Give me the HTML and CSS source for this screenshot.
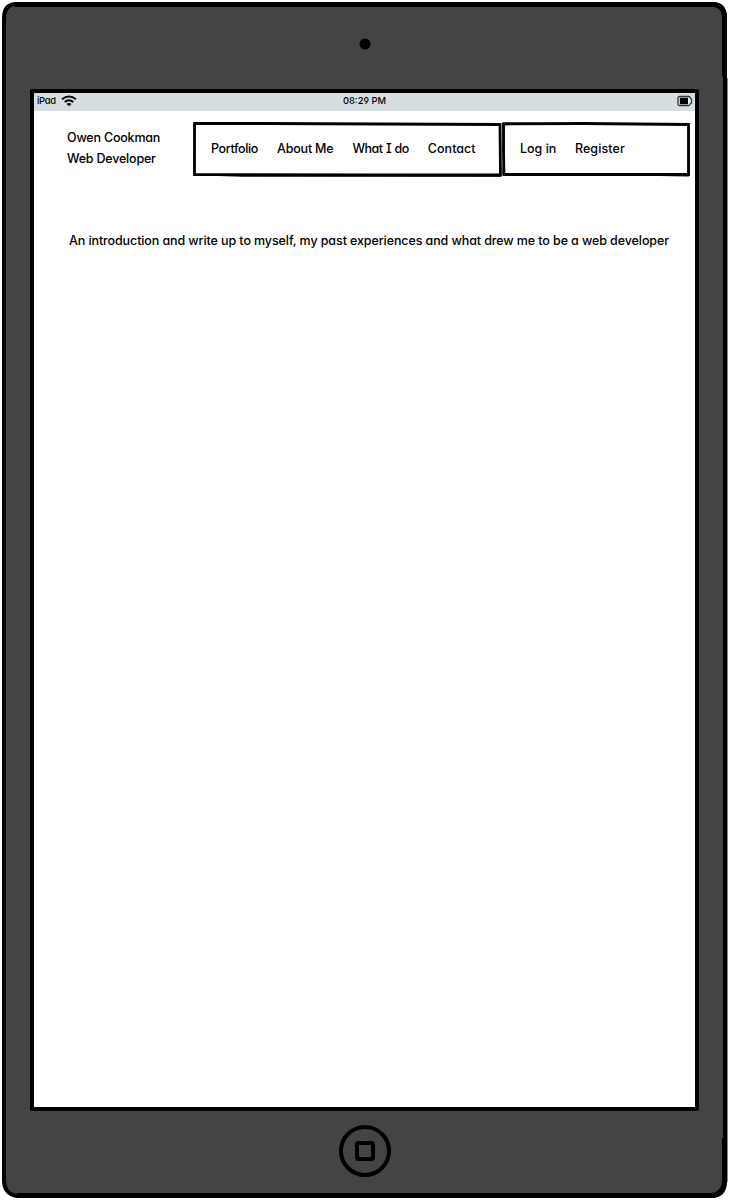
FILE: index.html
```html
<!DOCTYPE html>
<html lang="en">
<head>
<meta charset="utf-8">
<title>Owen Cookman - Web Developer</title>
<link rel="stylesheet" href="styles.css">
</head>
<body>
<div class="device">
  <svg class="shell" viewBox="0 0 729 1200" aria-hidden="true">
    <path d="M15 4H712Q725 4 725 18V1181Q725 1196 711 1196H17Q4 1194 4 1180V18Q4 5 15 4Z" fill="#444" stroke="#000" stroke-width="4"/>
    <path d="M15 4.500H712Q724.500 4.500 724.500 18V77M724.500 1138V1181Q723.500 1195 711 1195.500H17" fill="none" stroke="#000" stroke-width="5"/>
    <path d="M727.500 78V1182" stroke="#888" stroke-width="1"/>
  </svg>
  <div class="top-bezel"><svg class="camera" viewBox="0 0 12 12"><circle cx="6" cy="6" r="5.500"/></svg></div>
  <main class="screen">
    <div class="status">
      <div class="carrier"><span class="ipad">iPad</span>
        <svg class="wifi" viewBox="0 0 16 12"><g fill="none" stroke="#000" stroke-width="2"><path d="M1 4.200Q8-1 15 4.200"/><path d="M3.700 7Q8 3.400 12.300 7"/></g><path d="M5.500 9Q8 7.200 10.500 9L8 11.300Z"/></svg>
      </div>
      <span class="time">08:29 PM</span>
      <svg class="battery" viewBox="0 0 16 12"><path d="M2.500 1.500H11.500Q13 1.500 13 3L14.500 4V8L13 9Q13 10.500 11.500 10.500H2.500Q1 10.500 1 9V3Q1 1.500 2.500 1.500Z" fill="#eef2f3" stroke="#333" stroke-width="1.300"/><path d="M2.800 2.800H11V9.200H2.800Z"/></svg>
    </div>
    <header class="header">
      <div class="brand"><span class="owner">Owen Cookman</span><span class="role">Web Developer</span></div>
      <nav class="box nav">
        <svg class="outline" viewBox="0 0 309 56"><path d="M1.500 1.500L70 1.500L307 2.500L307.500 53L180 52.800L1.500 52.500L1.500 30Z" fill="none" stroke="#000" stroke-width="2.800"/><path d="M1 52.500L50 54H308M307 2L307 30L307 54M2 2L1 52" fill="none" stroke="#000" stroke-width="1.300"/></svg>
        <span class="portfolio">Portfolio</span><span class="about">About Me</span><span class="what">What I do</span><span class="contact">Contact</span>
      </nav>
      <div class="box account">
        <svg class="outline" viewBox="0 0 188 56"><path d="M1.500 2L80 1.500L186.500 2.500L186.500 25L186.500 52.500L80 52.500L2 52.500L1.500 30Z" fill="none" stroke="#000" stroke-width="2.800"/><path d="M1 1L100 2H187M2 3L2 30L1 53M70 52L187 54" fill="none" stroke="#000" stroke-width="1.200"/></svg>
        <span class="login">Log in</span><span class="register">Register</span>
      </div>
    </header>
    <p class="intro">An introduction and write up to myself, my past experiences and what drew me to be a web developer</p>
  </main>
  <div class="bottom-bezel"><svg class="home" viewBox="0 0 52 52"><circle cx="26" cy="26" r="24" fill="none" stroke="#000" stroke-width="4"/><rect x="18" y="18" width="16" height="16" rx="1.500" fill="none" stroke="#000" stroke-width="4"/></svg></div>
</div>
</body>
</html>
```
FILE: styles.css
```css
* { box-sizing: border-box; }
body { margin: 0; background: #fff; color: #000; font: 450 12.5px/21px Inter, "Open Sans", sans-serif; font-feature-settings: "cv11", "cv08", "cv04"; }
.device { position: relative; width: 729px; height: 1200px; display: flex; flex-direction: column; align-items: center; }
.shell { position: absolute; left: 0; top: 0; width: 729px; height: 1200px; z-index: -1; }
.top-bezel { width: 100%; height: 89px; display: flex; justify-content: center; padding: 38px 0 0 1px; }
.camera { width: 12px; height: 12px; }
.screen { width: 669px; height: 1022px; border: 4px solid #000; border-radius: 2px; background: #fff; }
.status { height: 18px; background: #d7dee1; display: grid; grid-template-columns: 1fr auto 1fr; padding: 0 3px; font-size: 9.4px; line-height: 16px; }
.carrier { display: flex; gap: 5px; }
.ipad { letter-spacing: -0.3px; }
.wifi { width: 16px; height: 12px; margin-top: 2px; }
.battery { width: 16px; height: 12px; margin: 2px -1px 0 0; justify-self: end; }
.header { display: flex; padding: 11px 0 0 33px; }
.brand { width: 126px; padding-top: 5px; display: flex; flex-direction: column; align-items: flex-start; letter-spacing: -0.2px; }
.box { position: relative; height: 56px; display: flex; padding: 16px 0 0 18px; white-space: nowrap; }
.outline { position: absolute; left: 0; top: 0; width: 100%; height: 100%; overflow: visible; }
.nav { width: 309px; gap: 19px; }
.account { width: 188px; gap: 18.5px; }
.portfolio { letter-spacing: -0.36px; }
.about { letter-spacing: -0.2px; }
.what { letter-spacing: -0.5px; word-spacing: 0.6px; }
.contact { letter-spacing: 0.04px; }
.register { letter-spacing: 0.1px; }
.intro { margin: 52px 0 0 35px; white-space: nowrap; letter-spacing: -0.1px; }
.bottom-bezel { padding: 14px 0 0 1px; }
.home { display: block; width: 52px; height: 52px; }
```
